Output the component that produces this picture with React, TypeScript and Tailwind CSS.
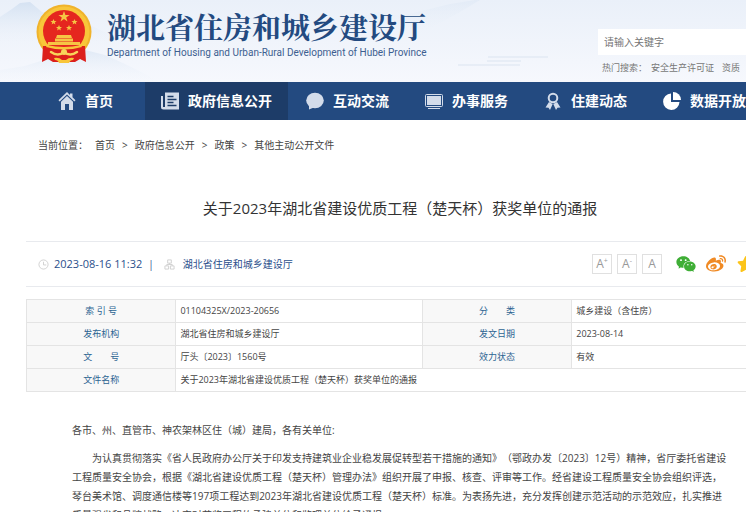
import type { ReactNode } from "react";
import { AiFillWechat } from "react-icons/ai";
import { FaStar, FaWeibo } from "react-icons/fa";

const smallStar = "m0-3 .9 2h2.1l-1.7 1.4.6 2.1-1.9-1.2-1.9 1.2.6-2.1-1.7-1.4h2.1z";

const Emblem = () => (
  <svg viewBox="0 0 56 60" className="h-[60px] w-14 shrink-0" aria-hidden="true">
    <circle cx="28" cy="28" r="27.5" fill="#f0b32c" />
    <circle cx="28" cy="28" r="25.5" fill="#f8c63a" />
    <circle cx="28" cy="27" r="21" fill="#e5261f" />
    <g fill="#f6c544">
      <path d="M28 7l1.4 4h4.2l-3.4 2.5 1.3 4-3.5-2.4-3.5 2.4 1.3-4-3.4-2.5h4.2z" />
      <path d={`M17.5 18${smallStar}`} />
      <path d={`M38.5 18${smallStar}`} />
      <path d={`M23 24${smallStar}`} />
      <path d={`M33 24${smallStar}`} />
      <path d="M21 31h14l1 3H20zM19 34.5h18v3H19zM12 38h32v3H12z" />
    </g>
    <path d="M7 42h7q14 5 28 0h7l1 16-6-3-5 3H17l-5-3-6 3z" fill="#dc1f1c" />
    <path d="M11 41q17 4 34 0l1 2q-18 5-36 0z" fill="#f8c63a" />
    <path d="M15 48q7 5 13 0 6 5 13 0" fill="none" stroke="#f8d45a" strokeWidth="2.5" strokeLinecap="round" />
    <circle cx="28" cy="48" r="3" fill="#f8d45a" />
    <path d="M18 54q5-1 8 2h4q3-3 8-2l-1 2q-3 0-4 3H23q-1-3-4-3z" fill="#f8c63a" />
  </svg>
);

const Mountains = () => (
  <svg
    viewBox="0 0 800 82"
    preserveAspectRatio="none"
    className="absolute inset-0 h-full w-full"
    aria-hidden="true"
  >
    <defs>
      <linearGradient id="sky" x1="0" x2="0" y1="0" y2="1">
        <stop offset="0" stopColor="#eaf0f9" />
        <stop offset="1" stopColor="#f6f8fd" />
      </linearGradient>
      <linearGradient id="hill" x1="0" x2="0" y1="0" y2="1">
        <stop offset="0" stopColor="#d5e2f2" />
        <stop offset="1" stopColor="#eff4fb" stopOpacity="0" />
      </linearGradient>
    </defs>
    <rect width="800" height="82" fill="url(#sky)" />
    <path d="M0 17 12 9 20 3 30 2 42 12 60 18 80 20 108 34 130 46H0z" fill="url(#hill)" />
    <path d="M0 70 25 66 50 58 85 50 105 55 125 64 145 74 160 82H0z" fill="url(#hill)" opacity=".6" />
    <path d="M330 34 360 17 378 12 400 16 430 9 450 4 475 0H480L460 12 420 34z" fill="url(#hill)" opacity=".35" />
    <path d="M458 65h62M487 61h34M488 57h60" stroke="#dbe4f0" strokeWidth="1" />
  </svg>
);

const HomeIcon = () => (
  <svg viewBox="0 0 18 18" className="h-[18px] w-[18px]" fill="#d3dcea">
    <path d="M9 0 .5 8.2l1.2 1.2L9 2.5l7.3 6.9 1.2-1.2-3-2.9V1.5H12v1.4z" />
    <path d="M9 4 3 9.7V18h4v-6h4v6h4V9.7z" />
  </svg>
);

const NewsIcon = () => (
  <svg viewBox="0 0 18 18" className="h-[18px] w-[18px]" fill="none">
    <path d="M4 .5h14v17H2.5A2.5 2.5 0 0 1 0 15V4h2v11h2z" fill="#d3dcea" />
    <path d="M6.5 4.5h6M6.5 7.5h9M6.5 10.5h6M6.5 13.5h9" stroke="#1d3c68" strokeWidth="1.5" />
  </svg>
);

const ChatIcon = () => (
  <svg viewBox="0 0 18 18" className="h-[18px] w-[18px]" fill="#d3dcea">
    <ellipse cx="9" cy="8.5" rx="8.8" ry="7.7" />
    <path d="M3 12v5.5l6-2.5z" />
  </svg>
);

const MonitorIcon = () => (
  <svg viewBox="0 0 18 18" className="h-[18px] w-[18px]" fill="none">
    <rect x=".5" y="2.5" width="17" height="12" rx="1" stroke="#d3dcea" />
    <rect x="2" y="4" width="14" height="9" fill="#d3dcea" />
    <path d="M3 16.5h12" stroke="#d3dcea" />
  </svg>
);

const MedalIcon = () => (
  <svg viewBox="0 0 18 18" className="h-[18px] w-[18px]" fill="#d3dcea">
    <circle cx="9" cy="6" r="4.3" fill="none" stroke="#d3dcea" strokeWidth="2" />
    <path d="M5 10 1.5 15.5l3 .2L6 18l2.7-6zM13 10l3.5 5.5-3 .2L12 18l-2.7-6z" />
  </svg>
);

const PieIcon = () => (
  <svg viewBox="0 0 18 18" className="h-[18px] w-[18px]" fill="#fff">
    <path d="M8 1.5V10h8.5A8.2 8.2 0 1 1 8 1.5z" />
    <path d="M10 0a8 8 0 0 1 8 8h-8z" />
  </svg>
);

interface NavItem {
  label: string;
  icon: ReactNode;
  className: string;
}

const navItems: NavItem[] = [
  { label: "首页", icon: <HomeIcon />, className: "pl-[18px] pr-8" },
  { label: "政府信息公开", icon: <NewsIcon />, className: "bg-[#1d3c68] px-4" },
  { label: "互动交流", icon: <ChatIcon />, className: "px-[18px]" },
  { label: "办事服务", icon: <MonitorIcon />, className: "px-[18px]" },
  { label: "住建动态", icon: <MedalIcon />, className: "px-[18px]" },
  { label: "数据开放", icon: <PieIcon />, className: "px-[18px]" },
];

const crumbs = ["首页", "政府信息公开", "政策", "其他主动公开文件"];

const Header = () => (
  <header className="relative flex h-[82px] items-start justify-between">
    <Mountains />
    <div className="relative flex gap-[15px] pl-9 pt-1">
      <Emblem />
      <div className="pt-[6px] text-[#234a80]">
        <h1 className='font-["Noto_Serif_CJK_SC","Noto_Sans_CJK_SC",serif] text-[29px] font-bold leading-[34px]'>
          湖北省住房和城乡建设厅
        </h1>
        <p className="pt-px font-[Roboto,sans-serif] text-[10px] leading-4 text-[#3d5f90]">
          Department of Housing and Urban-Rural Development of Hubei Province
        </p>
      </div>
    </div>
    <form className="relative w-[202px] pt-7">
      <input
        type="text"
        aria-label="搜索"
        placeholder="请输入关键字"
        className="h-[26px] w-full bg-white px-[6px] text-[10px] text-gray-700 outline-none placeholder:text-[#757575]"
      />
      <div className="flex pl-1 pt-1 text-[9px] leading-[18px] text-[#777]">
        <span className="mr-1">热门搜索：</span>
        <a href="#permit" className="mr-2">安全生产许可证</a>
        <a href="#cert">资质</a>
      </div>
    </form>
  </header>
);

const Nav = () => (
  <nav className="flex h-[38px] bg-[#234a80] pl-10 text-sm font-bold text-white">
    {navItems.map((item) => (
      <a
        key={item.label}
        href="#nav"
        className={`flex shrink-0 items-center gap-[7px] ${item.className}`}
      >
        <span className="w-5">{item.icon}</span>
        {item.label}
      </a>
    ))}
  </nav>
);

const MetaBar = () => (
  <div className="flex h-[46px] items-center border-y border-[#e8eaee] pl-3 text-[10px] text-[#2b4f8c]">
    <svg viewBox="0 0 12 12" className="mr-[5px] h-[11px] w-[11px]" fill="none" stroke="#cfcfcf">
      <circle cx="6" cy="6" r="5" />
      <path d="M6 3v3.5h3" />
    </svg>
    <time className="text-[11px]">2023-08-16 11:32</time>
    <span className="ml-[6px] mr-[10px]">|</span>
    <svg viewBox="0 0 12 12" className="mr-2 h-[11px] w-[11px]" fill="none" stroke="#cfcfcf">
      <path d="M4 1h4v3.5H4zM1 7.5h4V11H1zM7 7.5h4V11H7zM6 4.5V6M3 7.5V6h6v1.5" />
    </svg>
    <span>湖北省住房和城乡建设厅</span>
    <div className="ml-auto flex items-center gap-[5px] pr-[19px]">
      {["+", "-", ""].map((sign) => (
        <button
          key={sign}
          type="button"
          aria-label={`字号${sign}`}
          className="flex h-5 w-5 items-center justify-center border border-[#e0e0e0] text-xs text-[#999]"
        >
          A{sign && <sup className="text-[7px]">{sign}</sup>}
        </button>
      ))}
      <a href="#wechat" aria-label="微信" className="ml-2">
        <AiFillWechat className="h-[22px] w-[22px] text-[#3fae36]" />
      </a>
      <a href="#weibo" aria-label="微博" className="ml-1">
        <FaWeibo className="h-5 w-5 text-[#f08a24]" />
      </a>
      <a href="#favorite" aria-label="收藏" className="ml-[6px]">
        <FaStar className="h-[18px] w-[18px] text-[#fcc419]" />
      </a>
    </div>
  </div>
);

const Label = ({ children }: { children: ReactNode }) => (
  <th scope="row" className="border border-[#e4e4e4] bg-[#f8f8f8] font-normal text-[#2c6492]">
    <span className="whitespace-pre">{children}</span>
  </th>
);

const Value = ({ children, span }: { children: ReactNode; span?: number }) => (
  <td colSpan={span} className="border border-[#e4e4e4] pl-1 text-[#444]">
    {children}
  </td>
);

const InfoTable = () => (
  <table className="mt-3 w-full table-fixed border-collapse text-[9px]">
    <colgroup>
      <col className="w-[20%]" />
      <col className="w-[33%]" />
      <col className="w-[20%]" />
      <col className="w-[27%]" />
    </colgroup>
    <tbody>
      <tr className="h-[23px]">
        <Label>索 引 号</Label>
        <Value>01104325X/2023-20656</Value>
        <Label>分　　类</Label>
        <Value>城乡建设（含住房）</Value>
      </tr>
      <tr className="h-[23px]">
        <Label>发布机构</Label>
        <Value>湖北省住房和城乡建设厅</Value>
        <Label>发文日期</Label>
        <Value>2023-08-14</Value>
      </tr>
      <tr className="h-[23px]">
        <Label>文　　号</Label>
        <Value>厅头〔2023〕1560号</Value>
        <Label>效力状态</Label>
        <Value>有效</Value>
      </tr>
      <tr className="h-[23px]">
        <Label>文件名称</Label>
        <Value span={3}>关于2023年湖北省建设优质工程（楚天杯）获奖单位的通报</Value>
      </tr>
    </tbody>
  </table>
);

const App = () => {
  return (
    <div
      lang="zh-CN"
      className='h-screen overflow-hidden bg-white font-["Open_Sans","Noto_Sans_CJK_SC",sans-serif] [text-spacing-trim:space-all]'
    >
      <div className="min-w-[800px]">
        <Header />
        <Nav />
        <main className="px-[26px]">
          <div className="flex gap-[7px] pl-3 pt-4 text-[10px] leading-[18px] text-[#444]">
            <span>当前位置：</span>
            {crumbs.map((crumb, i) => (
              <span key={crumb} className="flex gap-[7px]">
                {i > 0 && <span>&gt;</span>}
                <a href="#crumb">{crumb}</a>
              </span>
            ))}
          </div>
          <h2 className="mb-[21px] mt-[42px] text-center text-[15px] leading-6 text-[#333]">
            关于2023年湖北省建设优质工程（楚天杯）获奖单位的通报
          </h2>
          <MetaBar />
          <InfoTable />
          <article className="pl-[46px] pr-11 pt-[29px] text-[10px] leading-[19px] text-[#444]">
            <p>各市、州、直管市、神农架林区住（城）建局，各有关单位:</p>
            <p className="mt-[9px] indent-5">
              为认真贯彻落实《省人民政府办公厅关于印发支持建筑业企业稳发展促转型若干措施的通知》（鄂政办发〔2023〕12号）精神，省厅委托省建设工程质量安全协会，根据《湖北省建设优质工程（楚天杯）管理办法》组织开展了申报、核查、评审等工作。经省建设工程质量安全协会组织评选，琴台美术馆、调度通信楼等197项工程达到2023年湖北省建设优质工程（楚天杯）标准。为表扬先进，充分发挥创建示范活动的示范效应，扎实推进质量强省和品牌战略，决定对获奖工程的承建单位和监理单位给予通报。
            </p>
          </article>
        </main>
      </div>
    </div>
  );
};

export default App;
